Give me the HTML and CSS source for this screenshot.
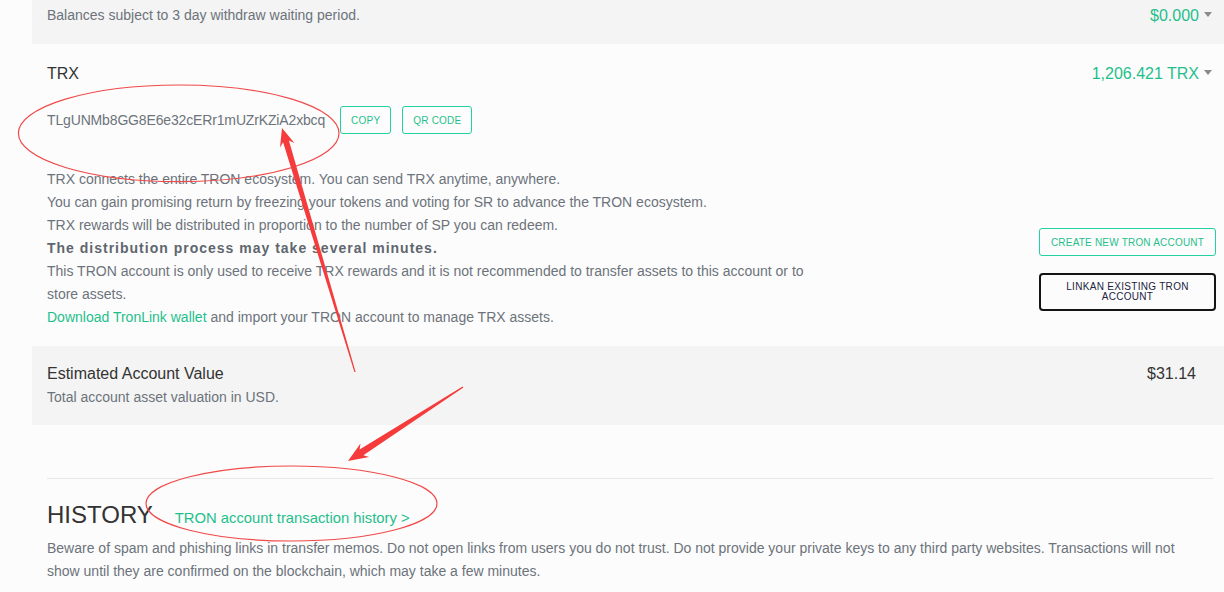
FILE: index.html
```html
<!DOCTYPE html>
<html lang="en">
<head>
<meta charset="utf-8">
<title>Account</title>
<link rel="stylesheet" href="styles.css">
</head>
<body>
<div class="page">
  <section class="panel panel-gray balances">
    <p class="muted">Balances subject to 3 day withdraw waiting period.</p>
    <div class="amount green">$0.000<span class="caret"></span></div>
  </section>

  <section class="panel trx">
    <div class="row-head">
      <h3 class="title">TRX</h3>
      <div class="amount green">1,206.421 TRX<span class="caret"></span></div>
    </div>
    <div class="address-row">
      <span class="address">TLgUNMb8GG8E6e32cERr1mUZrKZiA2xbcq</span>
      <button class="btn btn-green">COPY</button>
      <button class="btn btn-green">QR CODE</button>
    </div>
    <div class="trx-body">
      <div class="desc">
        <p>TRX connects the entire TRON ecosystem. You can send TRX anytime, anywhere.</p>
        <p>You can gain promising return by freezing your tokens and voting for SR to advance the TRON ecosystem.</p>
        <p>TRX rewards will be distributed in proportion to the number of SP you can redeem.</p>
        <p class="strong">The distribution process may take several minutes.</p>
        <p>This TRON account is only used to receive TRX rewards and it is not recommended to transfer assets to this account or to store assets.</p>
        <p><a class="link" href="#">Download TronLink wallet</a> and import your TRON account to manage TRX assets.</p>
      </div>
      <div class="actions">
        <button class="btn btn-green btn-wide">CREATE NEW TRON ACCOUNT</button>
        <button class="btn btn-dark btn-wide">LINKAN EXISTING TRON ACCOUNT</button>
      </div>
    </div>
  </section>

  <section class="panel panel-gray estimate">
    <div>
      <h3 class="title title-lg">Estimated Account Value</h3>
      <p class="muted">Total account asset valuation in USD.</p>
    </div>
    <div class="total">$31.14</div>
  </section>

  <section class="history">
    <div class="divider"></div>
    <div class="history-head">
      <h2>HISTORY</h2>
      <a class="link history-link" href="#">TRON account transaction history &gt;</a>
    </div>
    <p class="muted history-text">Beware of spam and phishing links in transfer memos. Do not open links from users you do not trust. Do not provide your private keys to any third party websites. Transactions will not show until they are confirmed on the blockchain, which may take a few minutes.</p>
  </section>
</div>

<svg class="annotations" width="1224" height="592" viewBox="0 0 1224 592">
  <ellipse cx="178.7" cy="133.3" rx="160.3" ry="48.3" fill="none" stroke="#f04a4a" stroke-width="1.2"/>
  <ellipse cx="291.5" cy="503.5" rx="145.5" ry="37.5" fill="none" stroke="#f04a4a" stroke-width="1.2"/>
  <polygon fill="#f53b3b" points="282,128 294.4,143.1 288.9,140.5 355.6,371.9 354.4,372.1 283.1,142.3 280,147.4"/>
  <polygon fill="#f53b3b" points="348,461 369.1,456.9 363.4,455.2 463.4,387.5 462.6,386.5 359.6,449.4 360.5,443.5"/>
</svg>
</body>
</html>
```

FILE: styles.css
```css
* { box-sizing: border-box; }

html, body {
  margin: 0;
  padding: 0;
}

body {
  background: #fcfcfc;
  font-family: "Liberation Sans", Arial, sans-serif;
  font-size: 14px;
  line-height: 23px;
  color: #6c737b;
  width: 1224px;
  height: 592px;
  overflow: hidden;
  position: relative;
}

p, h2, h3 { margin: 0; }

.page {
  padding-left: 32px;
}

.panel-gray {
  background: #f4f4f4;
}

.muted {
  color: #6c737b;
  font-size: 14px;
  line-height: 23px;
}

.green { color: #1fbf8c; }

.balances {
  display: flex;
  justify-content: space-between;
  padding: 4px 12px 17px 15px;
}

.amount {
  font-size: 16px;
  line-height: 23px;
  display: flex;
  align-items: center;
}

.caret {
  display: inline-block;
  width: 0;
  height: 0;
  border-left: 4px solid transparent;
  border-right: 4px solid transparent;
  border-top: 5px solid #8a8a8a;
  margin-left: 5px;
  margin-top: -3px;
}

.trx {
  padding: 18px 8px 17px 15px;
}

.row-head {
  display: flex;
  justify-content: space-between;
}

.row-head .amount { margin-right: 4px; }

.title {
  font-size: 16px;
  line-height: 23px;
  font-weight: normal;
  color: #333;
}

.title-lg { line-height: 24px; }

.address-row {
  display: flex;
  align-items: center;
  margin-top: 21px;
  height: 28px;
}

.address {
  font-size: 14px;
  color: #6c737b;
  letter-spacing: -0.15px;
  margin-right: 15px;
}

.btn {
  font-family: "Liberation Sans", Arial, sans-serif;
  font-size: 10px;
  height: 28px;
  padding: 0 10px;
  background: transparent;
  border-radius: 3px;
  cursor: pointer;
}

.btn-green {
  border: 1px solid #22d0a2;
  color: #1fbf8c;
  letter-spacing: 0.2px;
}

.address-row .btn + .btn { margin-left: 11px; }

.trx-body {
  display: flex;
  margin-top: 34px;
}

.desc {
  width: 790px;
}

.strong {
  font-weight: bold;
  letter-spacing: 1px;
  color: #5f666e;
}

.link {
  color: #1fbf8c;
  text-decoration: none;
}

.actions {
  margin-left: auto;
  width: 177px;
  padding-top: 60px;
  display: flex;
  flex-direction: column;
  gap: 17px;
}

.btn-wide {
  width: 177px;
}

.btn-dark {
  height: 38px;
  border: 2px solid #141414;
  border-radius: 4px;
  color: #1b2340;
  line-height: 10px;
  letter-spacing: 0.3px;
  padding: 0 20px;
}

.estimate {
  display: flex;
  justify-content: space-between;
  padding: 16px 28px 16px 15px;
}

.total {
  font-size: 16px;
  line-height: 24px;
  color: #333;
}

.history {
  margin: 0 11px 0 15px;
}

.divider {
  margin-top: 53px;
  border-top: 1px solid #e8e8e8;
}

.history-head {
  display: flex;
  align-items: baseline;
  margin-top: 21px;
}

.history-head h2 {
  font-size: 24px;
  line-height: 30px;
  font-weight: normal;
  color: #333;
  margin-right: 22px;
}

.history-link {
  font-size: 14.8px;
}

.history-text {
  margin-top: 7px;
  max-width: 1150px;
}

.annotations {
  position: absolute;
  left: 0;
  top: 0;
  pointer-events: none;
}
```
